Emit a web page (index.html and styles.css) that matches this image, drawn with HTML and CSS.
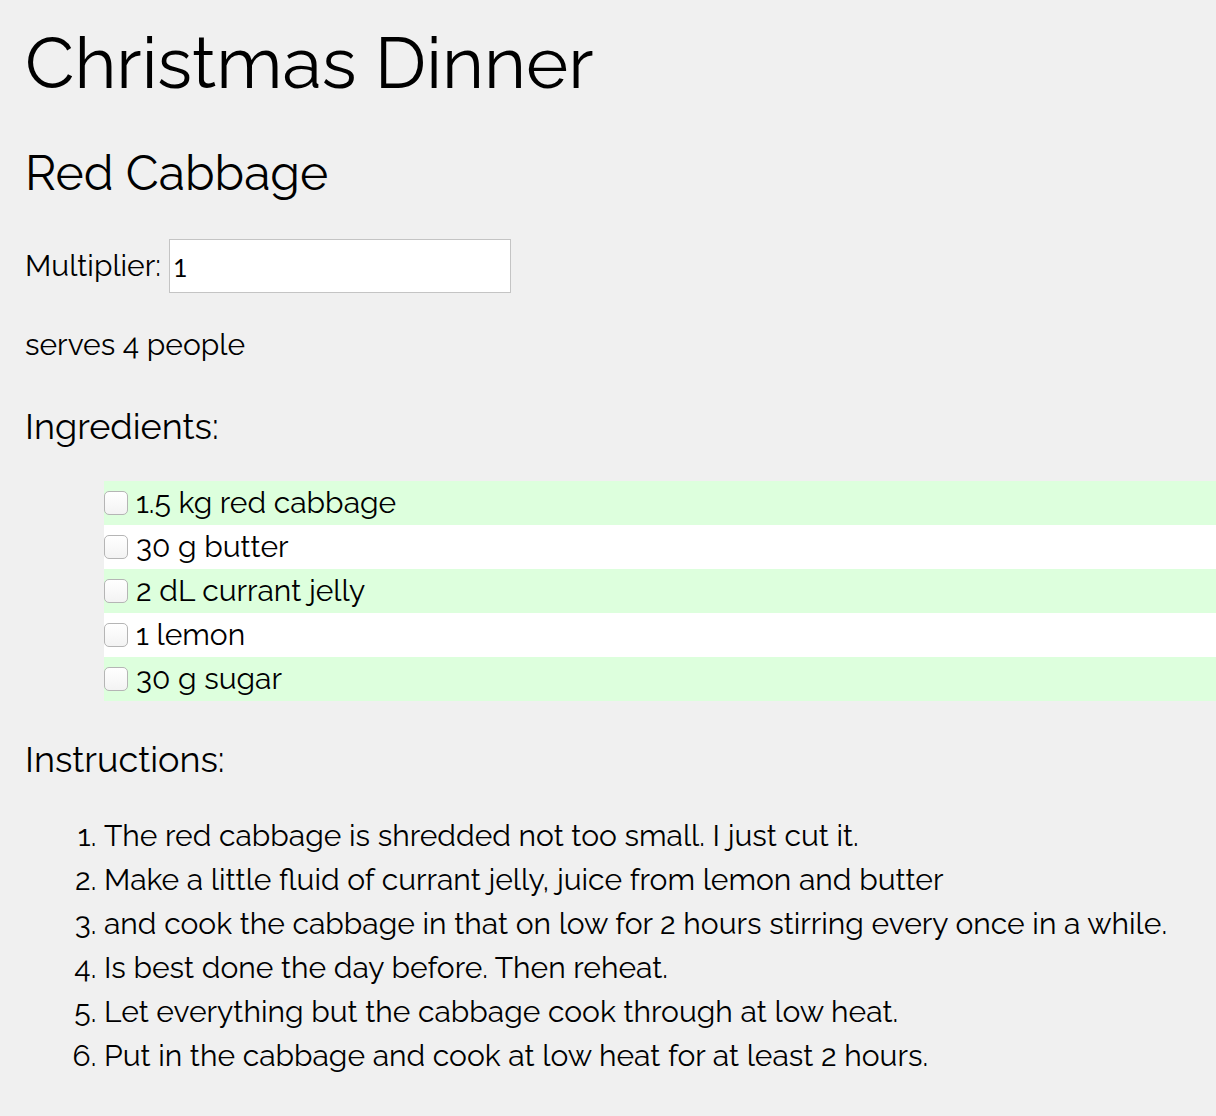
FILE: index.html
```html
<!DOCTYPE html>
<html lang="en">
<head>
<meta charset="utf-8">
<title>Christmas Dinner</title>
<link rel="stylesheet" href="styles.css">
</head>
<body>
<main class="page">
  <h1 class="title">Christmas Dinner</h1>
  <section class="recipe">
    <h2 class="recipe-name">Red Cabbage</h2>
    <div class="multiplier">
      <label class="multiplier-label" for="mult">Multiplier:</label>
      <input class="multiplier-input" id="mult" type="text" value="1">
    </div>
    <p class="serves">serves 4 people</p>
    <h3 class="section-title">Ingredients:</h3>
    <ul class="ingredients">
      <li class="ingredient odd"><input class="check" type="checkbox"><span>1.5 kg red cabbage</span></li>
      <li class="ingredient"><input class="check" type="checkbox"><span>30 g butter</span></li>
      <li class="ingredient odd"><input class="check" type="checkbox"><span>2 dL currant jelly</span></li>
      <li class="ingredient"><input class="check" type="checkbox"><span>1 lemon</span></li>
      <li class="ingredient odd"><input class="check" type="checkbox"><span>30 g sugar</span></li>
    </ul>
    <h3 class="section-title instructions-title">Instructions:</h3>
    <ol class="instructions">
      <li>The red cabbage is shredded not too small. I just cut it.</li>
      <li>Make a little fluid of currant jelly, juice from lemon and butter</li>
      <li>and cook the cabbage in that on low for 2 hours stirring every once in a while.</li>
      <li>Is best done the day before. Then reheat.</li>
      <li>Let everything but the cabbage cook through at low heat.</li>
      <li>Put in the cabbage and cook at low heat for at least 2 hours.</li>
    </ol>
  </section>
</main>
</body>
</html>
```

FILE: styles.css
```css
html, body {
  margin: 0;
  padding: 0;
  background: #f0f0f0;
}

body {
  font-family: "Raleway", "Lato", "Open Sans", sans-serif;
  color: #000;
  font-size: 30px;
  line-height: 1.2;
}

.page {
  padding: 0 0 40px 25px;
}

.title {
  margin: 18px 0 0 0;
  font-size: 72px;
  font-weight: 400;
  line-height: 90px;
}

.recipe-name {
  margin: 36px 0 0 0;
  font-size: 48px;
  font-weight: 400;
  line-height: 59px;
}

.multiplier {
  display: flex;
  align-items: center;
  gap: 8px;
  margin-top: 36px;
}

.multiplier-input {
  box-sizing: border-box;
  width: 342px;
  height: 54px;
  margin: 0;
  padding: 2px 3px 0;
  border: 1px solid #c4c4c4;
  background: #fff;
  font-family: "Lato", sans-serif;
  font-size: 25px;
  color: #000;
  outline: none;
}

.serves {
  margin: 34px 0 0 0;
  line-height: 36px;
}

.section-title {
  margin: 41px 0 0 0;
  font-size: 36px;
  font-weight: 400;
  line-height: 44px;
}

.ingredients {
  list-style: none;
  margin: 33px 0 0 0;
  padding: 0 0 0 79px;
}

.ingredient {
  display: flex;
  align-items: center;
  gap: 8px;
  height: 44px;
  line-height: 44px;
  background: #fff;
}

.ingredient.odd {
  background: #ddffdd;
}

.check {
  appearance: none;
  -webkit-appearance: none;
  box-sizing: border-box;
  width: 24px;
  height: 24px;
  margin: 0;
  border: 1px solid #b5b5b5;
  border-radius: 5px;
  background: linear-gradient(#ffffff, #f3f3f3);
  flex: none;
}

.instructions-title {
  margin-top: 36px;
}

.instructions {
  margin: 33px 0 0 0;
  padding: 0 0 0 79px;
}

.instructions li {
  line-height: 44px;
}
```
